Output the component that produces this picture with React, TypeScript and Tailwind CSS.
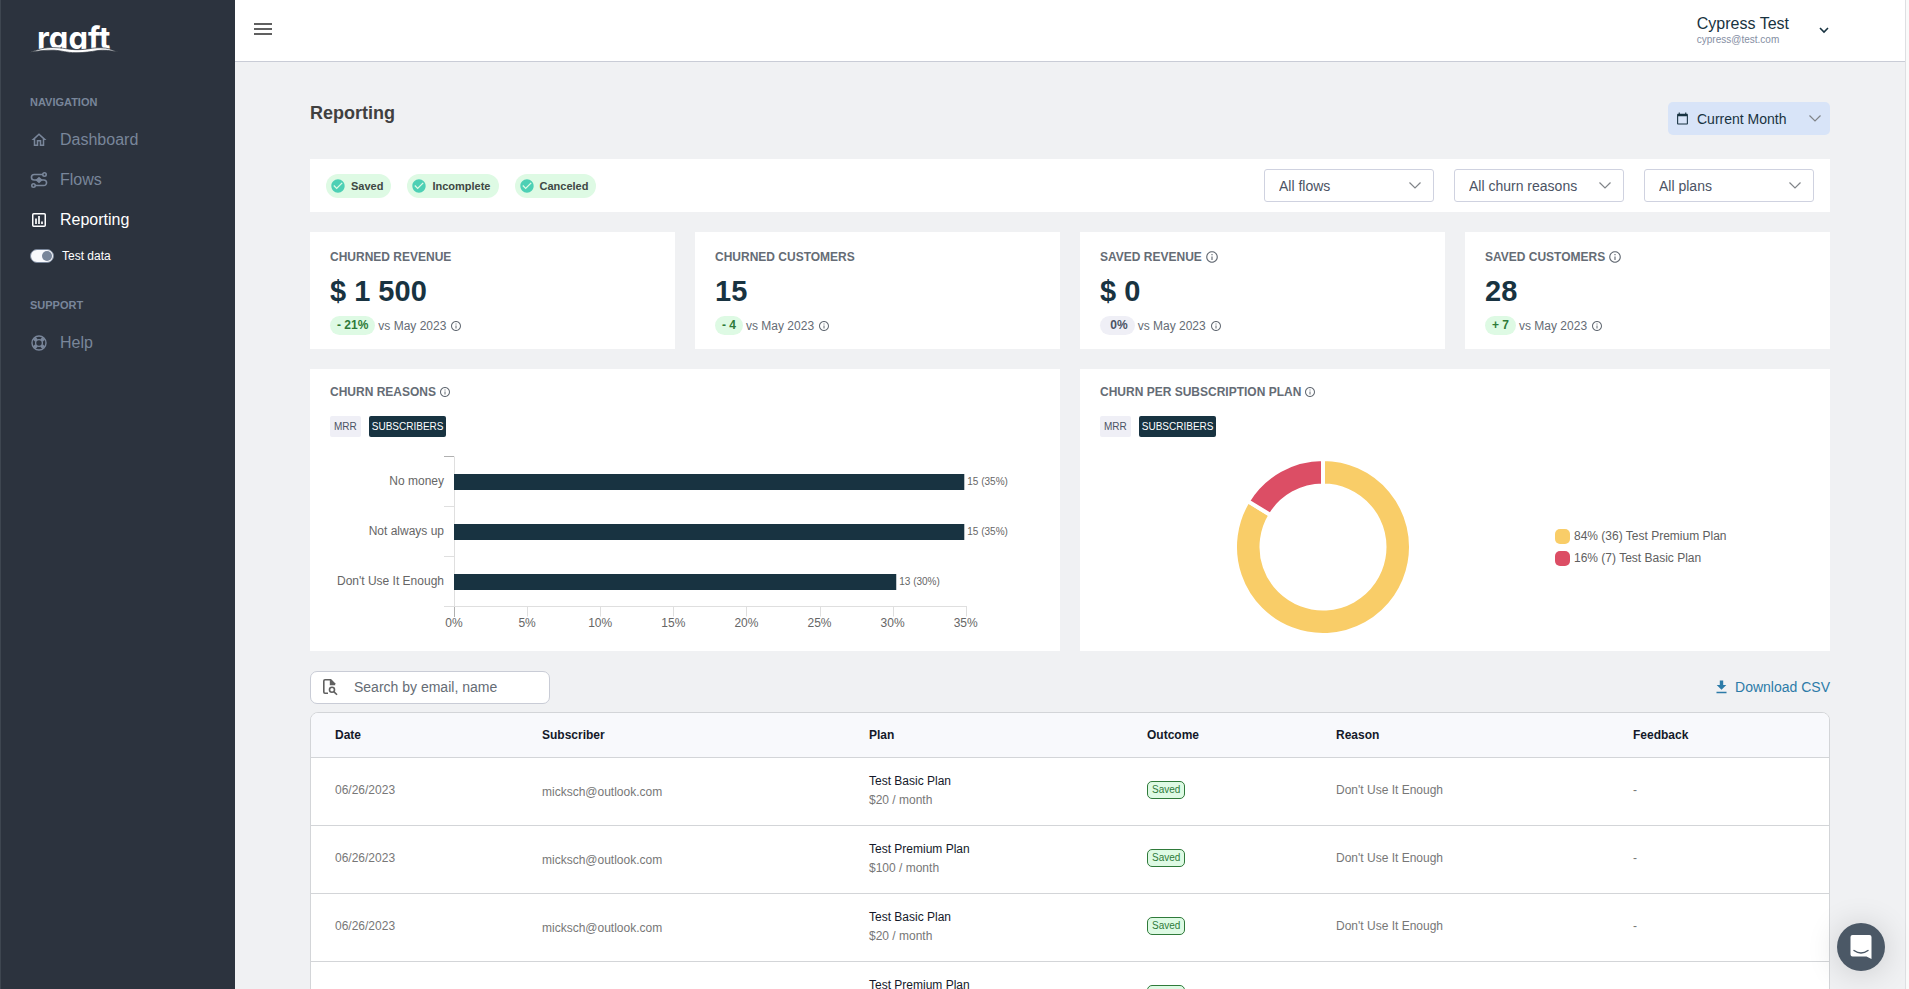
import { useState } from "react";
import type { ReactNode } from "react";
import {
  MdMenu,
  MdInfoOutline,
  MdOutlineHome,
  MdCalendarToday,
  MdCheckCircle,
} from "react-icons/md";

const INK = "#183341";

function Logo() {
  return (
    <svg viewBox="0 -6 92 44" className="h-11 w-[92px]" role="img" aria-label="raaft">
      <text
        x="7"
        y="27"
        fill="#fff"
        className="font-['Inter',sans-serif] text-[31px] font-bold [font-feature-settings:'cv11']"
      >
        raaft
      </text>
      <path
        d="M0 30.300C12 25.800 18 25.200 26 25.700C36 26.200 40 27.800 48 27.700C58 27.500 62 25.700 70 25.700C78 25.700 82 27.800 88 30C80 28.300 74 27.800 68 28.500C60 29.800 55 30.700 46 30.700C36 30.700 32 28.600 24 28.200C16 28 8 28.800 0 30.300Z"
        fill="#fff"
        stroke="#2c333e"
        strokeWidth="0.700"
      />
    </svg>
  );
}

function HomeIcon() {
  return <MdOutlineHome className="size-[18px]" />;
}

function FlowsIcon() {
  return (
    <svg viewBox="0 0 18 18" className="size-[18px]" fill="none" stroke="currentColor" strokeWidth="1.600">
      <circle cx="14.500" cy="3.500" r="1.700" />
      <circle cx="3.500" cy="14.500" r="1.700" />
      <path d="M12.800 3.500H4.200a2.700 2.700 0 0 0 0 5.500h9.600a2.700 2.700 0 0 1 0 5.500H5.200" />
      <path d="M6.500 9 9 6.800 11.500 9 9 11.200Z" fill="currentColor" />
    </svg>
  );
}

function ReportIcon() {
  return (
    <svg viewBox="0 0 18 18" className="size-[18px]" fill="none" stroke="currentColor">
      <rect x="2.750" y="2.750" width="12.500" height="12.500" rx="1" strokeWidth="1.500" />
      <path d="M6 7.500V13M9 5V13M12 10.500V13" strokeWidth="1.700" />
    </svg>
  );
}

function HelpIcon() {
  return (
    <svg viewBox="0 0 18 18" className="size-[18px]" fill="none" stroke="currentColor">
      <circle cx="9" cy="9" r="7" strokeWidth="1.400" />
      <circle cx="9" cy="9" r="3.400" strokeWidth="1.400" />
      <path d="M4.300 4.300 6.400 6.400M13.700 4.300 11.600 6.400M4.300 13.700 6.400 11.600M13.700 13.700 11.600 11.600" strokeWidth="3.600" />
    </svg>
  );
}

function Chevron() {
  return (
    <svg viewBox="0 0 12 7" className="pointer-events-none h-[7px] w-3 shrink-0" fill="none" stroke="#808488" strokeWidth="1.200">
      <path d="M0.500 0.500 6 6 11.500 0.500" />
    </svg>
  );
}

function NavItem({ icon, label, active }: { icon: ReactNode; label: string; active?: boolean }) {
  return (
    <a
      href="#"
      aria-current={active ? "page" : undefined}
      className={`flex h-10 items-center gap-3 text-base ${active ? "text-white" : "text-[#79869a]"}`}
    >
      {icon}
      {label}
    </a>
  );
}

function Sidebar() {
  const [on, setOn] = useState(true);
  return (
    <aside className="flex w-[235px] shrink-0 flex-col border-l border-[#3e4650] bg-[#2c333e] pt-4 pl-[29px]">
      <Logo />
      <h2 className="mt-[34px] text-[11px] leading-4 font-bold text-[#79869a]">NAVIGATION</h2>
      <nav className="mt-[10px] flex flex-col">
        <NavItem icon={<HomeIcon />} label="Dashboard" />
        <NavItem icon={<FlowsIcon />} label="Flows" />
        <NavItem icon={<ReportIcon />} label="Reporting" active />
      </nav>
      <label className="mt-[6px] flex h-5 cursor-pointer items-center gap-2 text-xs text-white">
        <input type="checkbox" className="peer sr-only" checked={on} onChange={(e) => setOn(e.target.checked)} />
        <span
          className={`flex h-[14px] w-6 items-center rounded-full border border-[#79869a] bg-[#f8f9fc] px-px ${on ? "justify-end" : "justify-start"}`}
        >
          <span className="size-[10px] rounded-full bg-[#79869a]" />
        </span>
        Test data
      </label>
      <h2 className="mt-[31px] text-[11px] leading-4 font-bold text-[#79869a]">SUPPORT</h2>
      <nav className="mt-[10px]">
        <NavItem icon={<HelpIcon />} label="Help" />
      </nav>
    </aside>
  );
}

function Header() {
  return (
    <header className="flex h-[62px] shrink-0 items-center justify-between border-b border-[#c9ccd6] bg-white pr-[76px] pb-px pl-4">
      <button type="button" aria-label="Toggle menu" className="-mt-[2px] text-[#606060]">
        <MdMenu className="size-6" />
      </button>
      <button type="button" className="flex items-center gap-[30px] text-left">
        <span className="flex flex-col">
          <span className="text-base leading-5 text-[#183341]">Cypress Test</span>
          <span className="text-[10px] leading-3 text-[#858ea3]">cypress@test.com</span>
        </span>
        <svg viewBox="0 0 10 7" className="h-[7px] w-[10px]" fill="none" stroke={INK} strokeWidth="1.600">
          <path d="M1 1 5 5 9 1" />
        </svg>
      </button>
    </header>
  );
}

function Chip({ label }: { label: string }) {
  return (
    <button type="button" className="flex h-6 items-center gap-[5px] rounded-full bg-[#defae4] pr-2 pl-1 text-[11px] font-bold text-[#404844]">
      <MdCheckCircle className="size-4 text-[#4dd0b5]" />
      <span className="pt-px">{label}</span>
    </button>
  );
}

function Select({ label }: { label: string }) {
  return (
    <div className="grid w-[170px] items-center [grid-template-areas:'s']">
      <select
        aria-label={label}
        className="h-[33px] w-full appearance-none rounded-[3px] border border-[#cfd2e0] bg-white pl-[14px] text-sm text-[#4b5364] [grid-area:s]"
      >
        <option>{label}</option>
      </select>
      <span className="pointer-events-none mr-[13px] justify-self-end [grid-area:s]">
        <Chevron />
      </span>
    </div>
  );
}

type Stat = { title: string; value: string; delta: string; info?: boolean; flat?: boolean };

const STATS: Stat[] = [
  { title: "CHURNED REVENUE", value: "$ 1 500", delta: "- 21%" },
  { title: "CHURNED CUSTOMERS", value: "15", delta: "- 4" },
  { title: "SAVED REVENUE", value: "$ 0", delta: "\u00a00%", info: true, flat: true },
  { title: "SAVED CUSTOMERS", value: "28", delta: "+ 7", info: true },
];

function StatCard({ title, value, delta, info, flat }: Stat) {
  return (
    <section className="flex h-[117px] flex-col bg-white px-5 pt-[17px]">
      <h3 className="flex h-4 items-center gap-[3px] text-xs font-bold text-[#656c75]">
        {title}
        {info && <MdInfoOutline className="size-[14px]" />}
      </h3>
      <p className="mt-2 text-[29px] leading-9 font-bold text-[#183341]">{value}</p>
      <p className="mt-[7px] flex items-center gap-[3px] text-xs text-[#656c75]">
        <span
          className={`h-[19px] rounded-full px-[7px] leading-[19px] font-bold ${flat ? "bg-[#efeff6] text-[#4b5364]" : "bg-[#defae4] text-[#2f7a3a]"}`}
        >
          {delta}
        </span>
        vs May 2023
        <MdInfoOutline className="ml-px size-3" />
      </p>
    </section>
  );
}

function ChartCard({ title, children }: { title: string; children: ReactNode }) {
  return (
    <section className="flex h-[282px] flex-col bg-white px-5 pt-[15px]">
      <h3 className="flex h-4 items-center gap-[3px] text-xs font-bold text-[#656c75]">
        {title}
        <MdInfoOutline className="size-3" />
      </h3>
      <div className="mt-4 flex gap-2 text-[10px]">
        <button type="button" className="h-[21px] rounded-[2px] bg-[#efeff6] px-1 text-[#4b5364]">
          MRR
        </button>
        <button type="button" className="h-[21px] rounded-[2px] bg-[#183341] px-[3px] text-white">
          SUBSCRIBERS
        </button>
      </div>
      {children}
    </section>
  );
}

const REASONS = [
  { label: "No money", count: 15, text: "15 (35%)" },
  { label: "Not always up", count: 15, text: "15 (35%)" },
  { label: "Don't Use It Enough", count: 13, text: "13 (30%)" },
];

function ReasonsChart() {
  return (
    <svg viewBox="0 0 710 190" className="mt-2 w-full" role="img" aria-label="Churn reasons">
      <g stroke="#dfdfdf" strokeWidth="1">
        <path d="M124.500 11.500V161.500M114 61.500h10M114 111.500h10M114 161.500H637" fill="none" />
        {[1, 2, 3, 4, 5, 6, 7].map((i) => (
          <path key={i} d={`M${Math.round(124 + i * 73.100) + 0.500} 161.500v10`} />
        ))}
        <path d="M114 11.500h10M124.500 162v10" stroke="#b0b0b0" />
      </g>
      {REASONS.map((r, i) => {
        const w = (r.count / 43 / 0.350) * 512;
        return (
          <g key={r.label}>
            <rect x="124" y={29 + i * 50} width={w} height="16" fill={INK} />
            <text x="114" y={40 + i * 50} textAnchor="end" fill="#666" className="text-xs">
              {r.label}
            </text>
            <text x={127 + w} y={40 + i * 50} fill="#666" className="text-[10px]">
              {r.text}
            </text>
          </g>
        );
      })}
      {[0, 5, 10, 15, 20, 25, 30, 35].map((v, i) => (
        <text key={v} x={124 + i * 73.100} y="182" textAnchor="middle" fill="#666" className="text-xs">
          {v}%
        </text>
      ))}
    </svg>
  );
}

function slice(from: number, to: number) {
  const R = 88;
  const r = 61.500;
  const p = (a: number, d: number) =>
    `${(90 + d * Math.sin(a * 2 * Math.PI)).toFixed(2)} ${(90 - d * Math.cos(a * 2 * Math.PI)).toFixed(2)}`;
  const big = to - from > 0.500 ? 1 : 0;
  return `M${p(from, R)}A${R} ${R} 0 ${big} 1 ${p(to, R)}L${p(to, r)}A${r} ${r} 0 ${big} 0 ${p(from, r)}Z`;
}

function PlanChart() {
  return (
    <div className="mt-5 flex items-center">
      <div className="flex flex-1 justify-center pr-[10px]">
        <svg viewBox="0 0 180 180" className="size-[180px]" role="img" aria-label="Churn per subscription plan">
          <path d={slice(0, 36 / 43)} fill="#f9cd68" stroke="#fff" strokeWidth="4" />
          <path d={slice(36 / 43, 1)} fill="#dc4e65" stroke="#fff" strokeWidth="4" />
        </svg>
      </div>
      <ul className="flex w-[255px] flex-col gap-[7px] text-xs leading-[15px] text-[#606060]">
        <li className="flex gap-1">
          <span className="size-[15px] rounded-[5px] bg-[#f9cd68]" />
          84% (36) Test Premium Plan
        </li>
        <li className="flex gap-1">
          <span className="size-[15px] rounded-[5px] bg-[#dc4e65]" />
          16% (7) Test Basic Plan
        </li>
      </ul>
    </div>
  );
}

const ROWS = [
  { plan: "Test Basic Plan", price: "$20 / month" },
  { plan: "Test Premium Plan", price: "$100 / month" },
  { plan: "Test Basic Plan", price: "$20 / month" },
  { plan: "Test Premium Plan", price: "$100 / month" },
];

const COLUMNS = [
  { name: "Date", width: "w-[207px]" },
  { name: "Subscriber", width: "w-[327px]" },
  { name: "Plan", width: "w-[278px]" },
  { name: "Outcome", width: "w-[189px]" },
  { name: "Reason", width: "w-[297px]" },
  { name: "Feedback", width: "w-auto" },
];

function SubscriberTable() {
  return (
    <div className="mt-2 overflow-hidden rounded-t-lg border border-[#d3d5d8] bg-white">
      <table className="w-full table-fixed text-left text-xs text-[#777]">
        <thead className="bg-[#f8f9fc] text-[#14192a]">
          <tr className="h-11 border-b border-[#d3d5d8]">
            {COLUMNS.map((c) => (
              <th key={c.name} className={`px-6 font-bold ${c.width}`}>
                {c.name}
              </th>
            ))}
          </tr>
        </thead>
        <tbody>
          {ROWS.map((r, i) => (
            <tr key={i} className="h-[68px] border-b border-[#d3d5d8]">
              <td className="px-6 pb-[2px]">06/26/2023</td>
              <td className="px-6 pt-[2px]">micksch@outlook.com</td>
              <td className="px-6 leading-[19px]">
                <div className="text-[#14192a]">{r.plan}</div>
                <div>{r.price}</div>
              </td>
              <td className="px-6 pb-[2px]">
                <span className="inline-block rounded-[5px] border border-[#2f7a3a] bg-[#defae4] px-1 text-[10px] leading-4 text-[#2f7a3a]">
                  Saved
                </span>
              </td>
              <td className="px-6 pb-[2px]">Don't Use It Enough</td>
              <td className="px-6 pb-[2px]">-</td>
            </tr>
          ))}
        </tbody>
      </table>
    </div>
  );
}

function PageSearchIcon() {
  return (
    <svg viewBox="0 0 16 18" className="h-[18px] w-4" fill="none" stroke="#606060" strokeWidth="1.600">
      <path d="M6 15.200H3A1.200 1.200 0 0 1 1.800 14V3A1.200 1.200 0 0 1 3 1.800H8.500" />
      <path d="M7.800 1H9L13.200 5.200V7.300H7.800Z" fill="#606060" stroke="none" />
      <circle cx="10" cy="11.800" r="2.500" />
      <path d="M11.800 13.600 15 16.800" />
    </svg>
  );
}

export default function App() {
  return (
    <div className="flex h-screen overflow-hidden bg-[#f0f1f3] font-['Liberation_Sans',Arial,sans-serif]">
      <Sidebar />
      <div className="flex min-w-0 flex-1 flex-col">
        <Header />
        <main className="flex-1 overflow-y-auto px-[75px] [scrollbar-width:none]">
          <div className="flex items-start justify-between pt-10">
            <h1 className="text-lg leading-[22px] font-bold text-[#404040]">Reporting</h1>
            <button type="button" className="flex h-[33px] w-[162px] items-center rounded-[5px] bg-[#d8e4f8] pr-[9px] pl-2 text-sm text-[#183341]">
              <MdCalendarToday className="mr-2 size-[13px]" />
              <span className="flex-1 text-left">Current Month</span>
              <Chevron />
            </button>
          </div>

          <div className="mt-6 flex h-[53px] items-center justify-between bg-white px-4">
            <div className="flex gap-4">
              <Chip label="Saved" />
              <Chip label="Incomplete" />
              <Chip label="Canceled" />
            </div>
            <div className="flex gap-5">
              <Select label="All flows" />
              <Select label="All churn reasons" />
              <Select label="All plans" />
            </div>
          </div>

          <div className="mt-5 grid grid-cols-4 gap-5">
            {STATS.map((s) => (
              <StatCard key={s.title} {...s} />
            ))}
          </div>

          <div className="mt-5 grid grid-cols-2 gap-5">
            <ChartCard title="CHURN REASONS">
              <ReasonsChart />
            </ChartCard>
            <ChartCard title="CHURN PER SUBSCRIPTION PLAN">
              <PlanChart />
            </ChartCard>
          </div>

          <div className="mt-5 flex items-center justify-between">
            <label className="flex h-[33px] w-60 items-center gap-4 rounded-[7px] border border-[#c9ccd6] bg-white pb-px pl-[11px]">
              <PageSearchIcon />
              <input
                type="text"
                aria-label="Search by email, name"
                placeholder="Search by email, name"
                className="min-w-0 flex-1 text-sm text-[#4b5364] outline-none placeholder:text-[#656c75]"
              />
            </label>
            <a href="#" className="flex items-center gap-2 pb-[2px] text-sm text-[#2c7ba8]">
              <svg viewBox="0 0 11 14" className="h-[14px] w-[11px]" fill="currentColor">
                <path d="M3.800 0.500h3.400V5H10.300L5.500 9.800 0.700 5H3.800ZM0.500 11.800h10v1.500h-10Z" />
              </svg>
              Download CSV
            </a>
          </div>

          <SubscriberTable />
        </main>
      </div>
      <div className="w-1 shrink-0 border-l border-[#dedfe2] bg-[#fafafa]" />

      <button
        type="button"
        aria-label="Open chat"
        className="fixed right-6 bottom-[18px] flex size-12 items-center justify-center rounded-full bg-[#4b5866] shadow-[0_2px_32px_rgba(0,0,0,0.16)]"
      >
        <svg viewBox="0 0 22 24" className="h-6 w-[22px]">
          <path d="M2.500 0H19.500A2 2 0 0 1 21.500 2V24L16.500 21.500H2.500A2 2 0 0 1 0.500 19.500V2A2 2 0 0 1 2.500 0Z" fill="#fff" />
          <path d="M4 15.500Q11 20.500 18 15.500" fill="none" stroke="#4b5866" strokeWidth="1.400" strokeLinecap="round" />
        </svg>
      </button>
    </div>
  );
}
